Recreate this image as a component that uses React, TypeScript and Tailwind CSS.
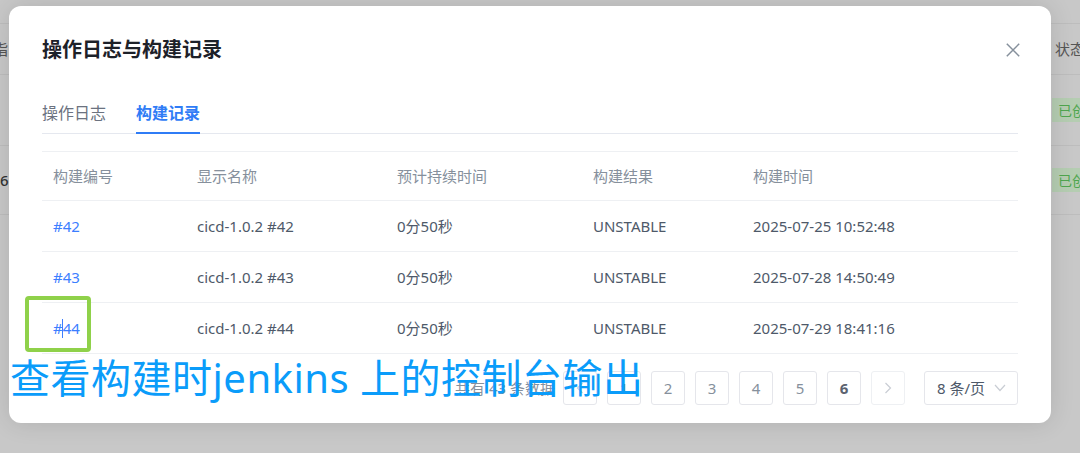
const FONT = { fontFamily: '"Noto Sans", "Noto Sans CJK SC", sans-serif' };

const rows = [
  { no: "#42", name: "cicd-1.0.2 #42", dur: "0分50秒", result: "UNSTABLE", time: "2025-07-25 10:52:48" },
  { no: "#43", name: "cicd-1.0.2 #43", dur: "0分50秒", result: "UNSTABLE", time: "2025-07-28 14:50:49" },
  { no: "#44", name: "cicd-1.0.2 #44", dur: "0分50秒", result: "UNSTABLE", time: "2025-07-29 18:41:16" },
];

const cols = "grid grid-cols-[144px_200px_196px_160px_1fr] items-center pl-[11px]";

function Chevron({ dir }: { dir: "left" | "right" }) {
  return (
    <svg width="8" height="12" viewBox="0 0 8 12" fill="none">
      <path
        d={dir === "right" ? "M1.5 1 L6.5 6 L1.5 11" : "M6.5 1 L1.5 6 L6.5 11"}
        stroke="#c9cdd4"
        strokeWidth="1.2"
      />
    </svg>
  );
}

function PageBox({ children, bold = false, faint = false }: { children: React.ReactNode; bold?: boolean; faint?: boolean }) {
  return (
    <div
      className={[
        "flex h-[34px] w-[34px] items-center justify-center rounded-[3px] border text-[15px]",
        faint ? "border-[#eef0f3]" : "border-[#e5e6eb]",
        bold ? "font-bold text-[#5c6370]" : "text-[#86909c]",
      ].join(" ")}
    >
      {children}
    </div>
  );
}

export default function App() {
  return (
    <div className="relative h-[453px] w-[1080px] overflow-hidden bg-[#c8c8c8]" style={FONT}>
      {/* dimmed page behind the modal */}
      <div className="whitespace-nowrap pt-[23px] text-[15px] text-[#555]">
        <div className="flex h-[51px] items-center border-t border-[#bdbdbd]">
          <div className="w-[1052px] shrink-0">
            <span className="-ml-[7px]">指</span>
          </div>
          <div className="pl-[3px]">状态</div>
        </div>
        <div className="flex h-[71px] items-center border-t border-[#bdbdbd]">
          <div className="w-[1052px] shrink-0" />
          <div className="flex h-[24px] flex-1 items-center bg-[#b5cdb2] pl-[6px] text-[14px] text-[#4fa64f]">已创建</div>
        </div>
        <div className="flex h-[70px] items-center border-y border-[#bdbdbd]">
          <div className="w-[1052px] shrink-0 font-medium text-[#333]">6</div>
          <div className="flex h-[24px] flex-1 items-center bg-[#b5cdb2] pl-[6px] text-[14px] text-[#4fa64f]">已创建</div>
        </div>
      </div>

      {/* modal */}
      <div className="absolute left-[9px] top-[6px] w-[1042px] rounded-[12px] bg-white px-[33px] pb-[18px] pt-[32px] shadow-[0_0_24px_rgba(0,0,0,0.12)]">
        <div className="flex items-center justify-between">
          <h2 className="text-[20px] font-bold leading-[24px] text-[#1d2129]">操作日志与构建记录</h2>
          <svg width="14" height="14" viewBox="0 0 14 14" className="-mr-[2px]">
            <path d="M0.8 0.8 L13.2 13.2 M13.2 0.8 L0.8 13.2" stroke="#86909c" strokeWidth="1.5" />
          </svg>
        </div>

        <div className="mt-[39px] flex gap-[30px] border-b border-[#e5e8ef] text-[16px] leading-[24px]">
          <div className="-mb-px border-b-2 border-transparent pb-[7px] text-[#6b7280]">操作日志</div>
          <div className="-mb-px border-b-2 border-[#2f7cf6] pb-[7px] font-bold text-[#2f7cf6]">构建记录</div>
        </div>

        <div className="mt-[17px] text-[15px]">
          <div className={`${cols} h-[50px] border-y border-[#eef0f3] text-[#86909c]`}>
            <div>构建编号</div>
            <div>显示名称</div>
            <div>预计持续时间</div>
            <div>构建结果</div>
            <div>构建时间</div>
          </div>
          {rows.map((r, i) => (
            <div key={r.no} className={`${cols} h-[51px] border-b border-[#eef0f3] text-[#4e5969]`}>
              <div className="relative text-[#3c7eff]">
                {r.no}
                {i === 2 && <span className="absolute left-[9px] top-[2px] h-[19px] w-px bg-[#3c7eff]" />}
              </div>
              <div>{r.name}</div>
              <div>{r.dur}</div>
              <div>{r.result}</div>
              <div>{r.time}</div>
            </div>
          ))}
        </div>

        <div className="mt-[17px] flex items-center justify-end">
          <span className="mr-[8px] text-[15px] text-[#86909c]">共有 43 条数据</span>
          <div className="flex gap-[10px]">
            <PageBox>
              <Chevron dir="left" />
            </PageBox>
            <PageBox>1</PageBox>
            <PageBox>2</PageBox>
            <PageBox>3</PageBox>
            <PageBox>4</PageBox>
            <PageBox>5</PageBox>
            <PageBox bold>6</PageBox>
            <PageBox faint>
              <Chevron dir="right" />
            </PageBox>
          </div>
          <div className="ml-[19px] flex h-[34px] w-[94px] items-center justify-between rounded-[3px] border border-[#e5e6eb] pl-[12px] pr-[11px] text-[15px] text-[#4e5969]">
            <span>8 条/页</span>
            <svg width="12" height="8" viewBox="0 0 12 8" fill="none">
              <path d="M1 1 L6 6.5 L11 1" stroke="#c9cdd4" strokeWidth="1.2" />
            </svg>
          </div>
        </div>
      </div>

      {/* annotations */}
      <div className="absolute left-[25px] top-[296px] h-[56px] w-[66px] rounded-[4px] border-4 border-[#8fd14a]" />
      <div className="absolute left-[10px] top-[358px] whitespace-nowrap text-[40px] leading-[40px] tracking-[0.5px] text-[#0a9cfa]">
        查看构建时jenkins 上的控制台输出
      </div>
    </div>
  );
}
